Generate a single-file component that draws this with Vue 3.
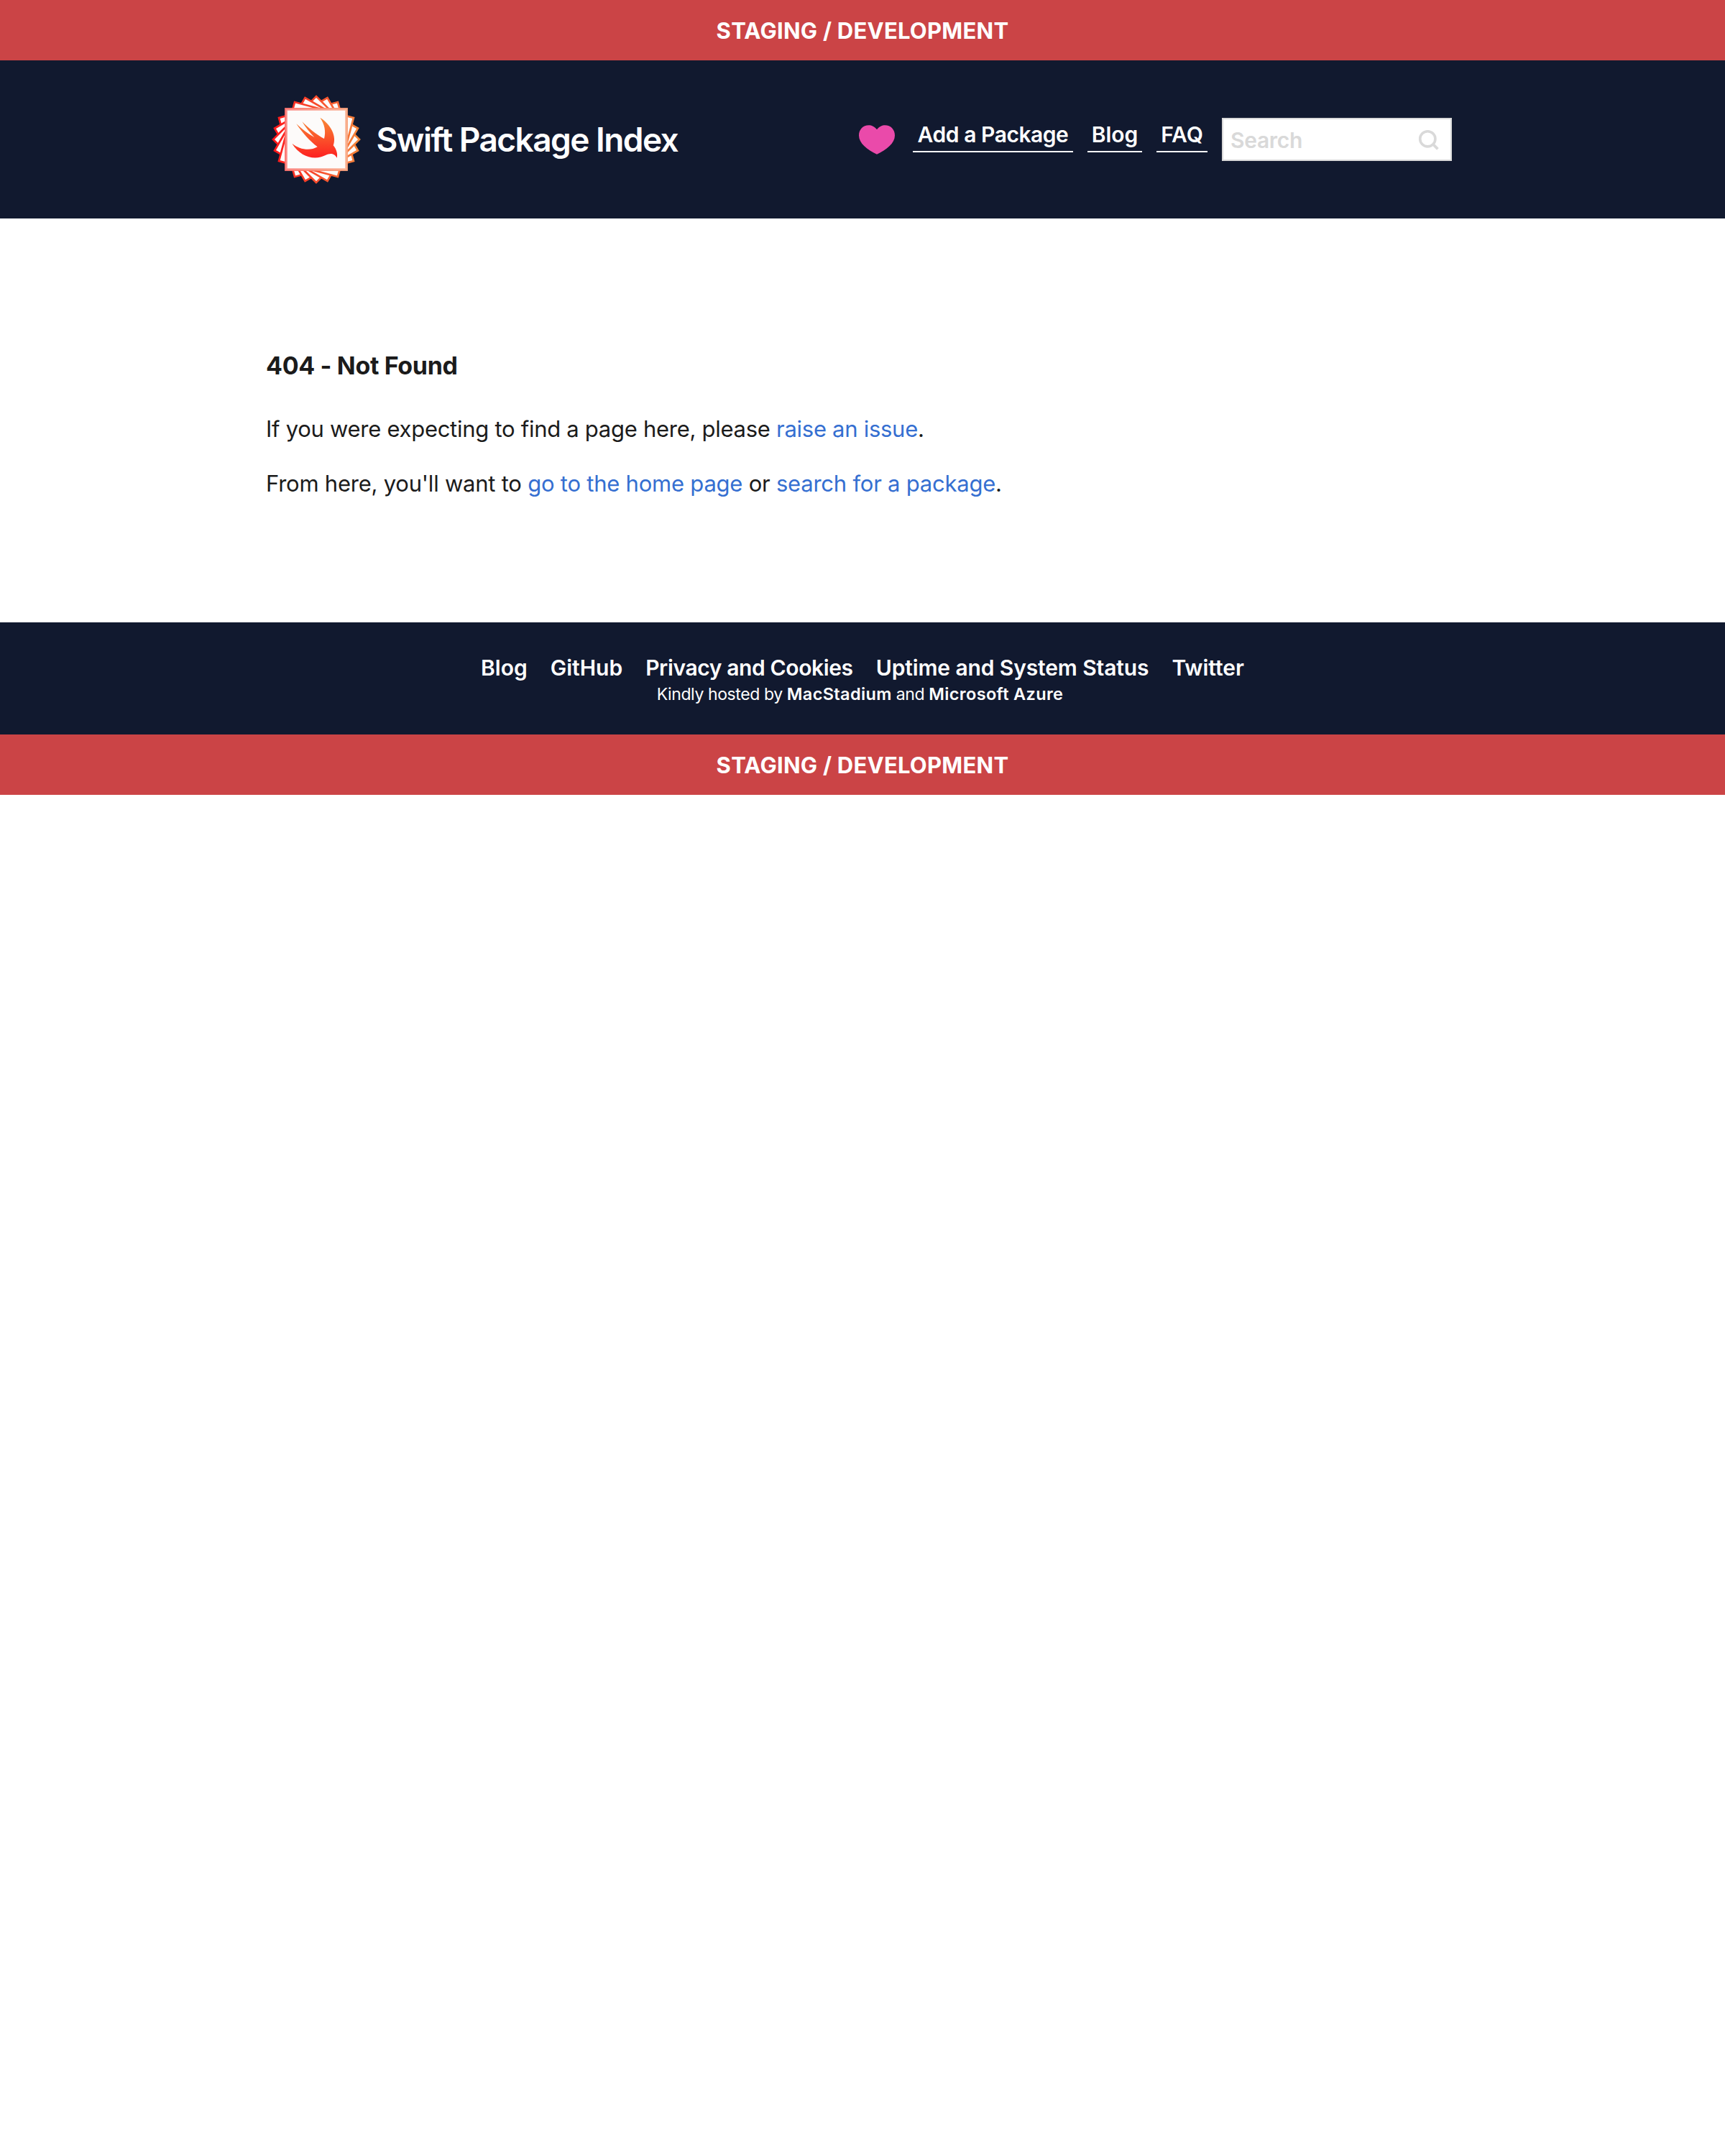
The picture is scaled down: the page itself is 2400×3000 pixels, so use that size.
<script setup>
// Emblem: six squares fanned out in 15 degree steps, the upright one in front.
const half = 42.4
const fan = [75, 60, 45, 30, 15].map((deg) =>
  [45, 135, 225, 315]
    .map((corner) => {
      const a = ((corner + deg) * Math.PI) / 180
      const r = half * Math.SQRT2
      return `${(64 + r * Math.cos(a)).toFixed(2)},${(64 + r * Math.sin(a)).toFixed(2)}`
    })
    .join(' ')
)

const navLinks = [
  { label: 'Add a Package', name: 'add' },
  { label: 'Blog', name: 'blog' },
  { label: 'FAQ', name: 'faq' }
]

const footerLinks = [
  { label: 'Blog', name: 'blog' },
  { label: 'GitHub', name: 'github' },
  { label: 'Privacy and Cookies', name: 'privacy' },
  { label: 'Uptime and System Status', name: 'uptime' },
  { label: 'Twitter', name: 'twitter' }
]
</script>

<template>
  <div class="page">
    <div class="staging">STAGING / DEVELOPMENT</div>

    <header class="header">
      <div class="inner">
        <a class="brand">
          <svg class="logo" viewBox="0 0 128 128" width="128" height="128">
            <defs>
              <linearGradient id="edge" gradientUnits="userSpaceOnUse" x1="3" y1="0" x2="125" y2="0">
                <stop offset="0" stop-color="#fb1418" />
                <stop offset="0.2" stop-color="#fa2c22" />
                <stop offset="0.8" stop-color="#f66a35" />
                <stop offset="1" stop-color="#f58a3c" />
              </linearGradient>
              <linearGradient id="bird" x1="0" y1="0" x2="0" y2="1">
                <stop offset="0" stop-color="#f88a36" />
                <stop offset="1" stop-color="#fd2020" />
              </linearGradient>
            </defs>
            <polygon
              v-for="points in fan"
              :key="points"
              :points="points"
              fill="#fdfbfa"
              stroke="url(#edge)"
              stroke-width="2.7"
            />
            <rect x="20.2" y="20.2" width="87.6" height="87.6" fill="#fdfbfa" />
            <rect
              x="22" y="22" width="84" height="84"
              fill="none" stroke="url(#edge)" stroke-opacity="0.5" stroke-width="3.6"
            />
            <rect
              x="20.9" y="20.9" width="86.2" height="86.2"
              fill="none" stroke="url(#edge)" stroke-opacity="0.4" stroke-width="1.4"
            />
            <g transform="translate(-16 -20) scale(0.33333)">
              <path
                fill="url(#bird)"
                d="M256 161 C301 189 326 238 311 277 C326 295 330 315 326 329 C315 308 297 309 280 317 C235 341 175 327 139 269 C170 294 213 302 245 283 C211 257 181 223 157 187 C180 209 205 229 232 243 C213 223 195 201 181 178 C207 204 240 232 273 249 C281 219 275 188 256 161 Z"
              />
            </g>
          </svg>
          <span class="brand-name">Swift Package Index</span>
        </a>

        <nav class="nav">
          <svg class="heart" viewBox="0 0 150 122" width="50" height="41">
            <path
              fill="#ea4aaa"
              d="M75 18C65 5 53 0 41 0C17 0 0 18 0 43C0 76 35 102 75 122C115 102 150 76 150 43C150 18 133 0 109 0C97 0 85 5 75 18Z"
            />
          </svg>
          <a v-for="link in navLinks" :key="link.name" class="nav-link" :class="link.name">{{ link.label }}</a>
          <div class="search">
            <span>Search</span>
            <svg viewBox="0 0 30 30" width="30" height="30" fill="none" stroke="#d9d9d9">
              <circle cx="13.3" cy="13.3" r="10.6" stroke-width="3.6" />
              <path d="M20.7 20.7L27.4 27.3" stroke-width="3.8" />
            </svg>
          </div>
        </nav>
      </div>
    </header>

    <main class="main">
      <h1>404 - Not Found</h1>
      <p>If you were expecting to find a page here, please <a>raise an issue</a>.</p>
      <p class="second">From here, you'll want to <a>go to the home page</a> or <a>search for a package</a>.</p>
    </main>

    <footer class="footer">
      <div class="footer-links">
        <a v-for="link in footerLinks" :key="link.name" :class="link.name">{{ link.label }}</a>
      </div>
      <small>Kindly hosted by <a>MacStadium</a> and <a>Microsoft Azure</a></small>
    </footer>

    <div class="staging">STAGING / DEVELOPMENT</div>
  </div>
</template>

<style>
body {
  margin: 0;
  background: #fff;
}
</style>

<style scoped>
.page {
  font-family: Inter, 'Liberation Sans', sans-serif;
  color: #1b1b1b;
}
.staging {
  box-sizing: border-box;
  height: 84px;
  padding-top: 1px;
  line-height: 84px;
  background: #cb4446;
  color: #fff;
  font-size: 31px;
  font-weight: 700;
  letter-spacing: 0.25px;
  text-align: center;
}
.header {
  height: 220px;
  background: #11192f;
  color: #fff;
}
.inner {
  box-sizing: border-box;
  width: 1660px;
  height: 100%;
  margin: 0 auto;
  padding: 0 10px 0 6px;
  display: flex;
  align-items: center;
  justify-content: space-between;
}
.brand {
  display: flex;
  align-items: center;
}
.logo {
  display: block;
}
.brand-name {
  margin-left: 19.5px;
  font-size: 46px;
  line-height: 56px;
  font-weight: 600;
  letter-spacing: -1.55px;
  white-space: nowrap;
}
.nav {
  display: flex;
  align-items: center;
  gap: 20px;
  font-size: 30px;
  font-weight: 600;
}
.heart {
  display: block;
  margin-right: 5px;
}
.nav-link {
  margin-bottom: 12px;
  line-height: 46px;
  border-bottom: 2px solid #fff;
  text-align: center;
  white-space: nowrap;
}
.nav-link.add {
  width: 223px;
  letter-spacing: -0.46px;
}
.nav-link.blog {
  width: 76px;
}
.nav-link.faq {
  width: 71px;
}
.search {
  box-sizing: border-box;
  width: 320px;
  height: 60px;
  padding: 1px 15px 0 10px;
  display: flex;
  align-items: center;
  justify-content: space-between;
  background: #fff;
  border: 2px solid #d9d9d9;
  color: #d9d9d9;
  letter-spacing: -0.3px;
}
.main {
  box-sizing: border-box;
  width: 1660px;
  height: 562px;
  margin: 0 auto;
  padding-top: 181px;
}
h1 {
  margin: 0 0 40px;
  font-size: 34px;
  line-height: 48px;
  font-weight: 700;
  letter-spacing: -0.35px;
}
p {
  margin: 0 0 28px;
  font-size: 31px;
  line-height: 48px;
  letter-spacing: -0.28px;
}
p.second {
  letter-spacing: -0.23px;
}
p a {
  color: #356fd1;
}
.footer {
  box-sizing: border-box;
  height: 156px;
  padding-top: 45px;
  display: flex;
  flex-direction: column;
  align-items: center;
  background: #11192f;
  color: #fff;
}
.footer-links {
  display: flex;
  gap: 32px;
  font-size: 30px;
  line-height: 36px;
  font-weight: 600;
}
.footer-links .privacy {
  letter-spacing: -0.38px;
}
.footer-links .uptime {
  letter-spacing: -0.12px;
}
small {
  padding-right: 7px;
  margin-top: 1px;
  font-size: 23px;
  line-height: 36px;
  letter-spacing: -0.4px;
}
small a {
  font-size: 23.5px;
  font-weight: 600;
  letter-spacing: 0.35px;
}
</style>
